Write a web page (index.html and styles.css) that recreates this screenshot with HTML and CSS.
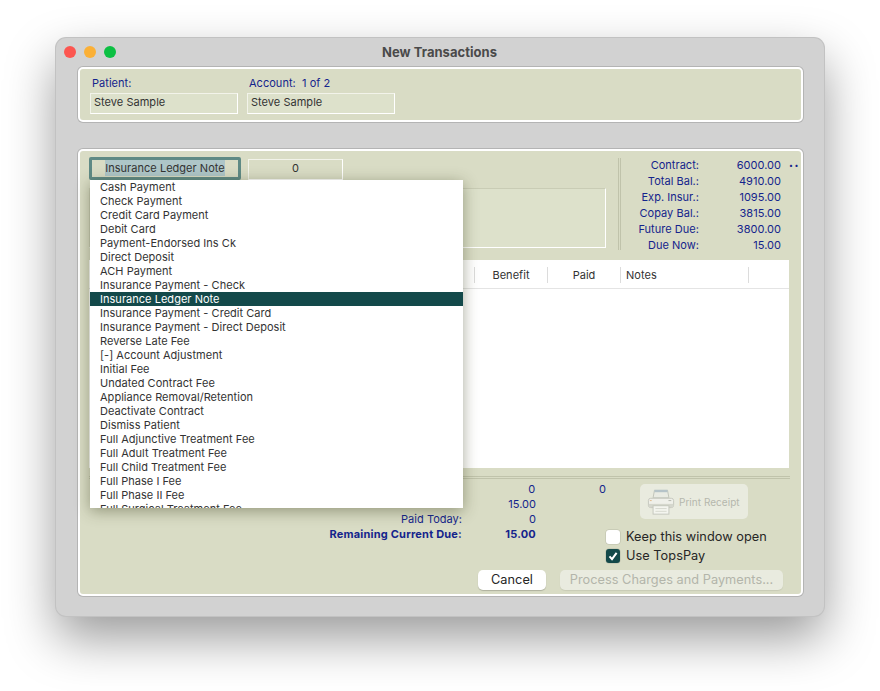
FILE: index.html
```html
<!DOCTYPE html>
<html lang="en">
<head>
    <meta charset="UTF-8">
    <meta name="viewport" content="width=device-width, initial-scale=1.0">
    <title>New Transactions</title>
    <link rel="stylesheet" href="styles.css">
</head>
<body>
    <div class="window">
        <div class="titlebar">
            <div class="lights">
                <span class="light red"></span>
                <span class="light yellow"></span>
                <span class="light green"></span>
            </div>
            <div class="title">New Transactions</div>
        </div>

        <div class="panel panel-patient">
            <div class="patient-col col-name">
                <div class="label">Patient:</div>
                <div class="field">Steve Sample</div>
            </div>
            <div class="patient-col col-account">
                <div class="label">Account:&nbsp; 1 of 2</div>
                <div class="field">Steve Sample</div>
            </div>
        </div>

        <div class="panel panel-main">
            <div class="top-row">
                <div class="top-left">
                    <div class="popup-row">
                        <div class="popup"><span class="popup-text">Insurance Ledger Note</span></div>
                        <div class="field field-amount">0</div>
                    </div>
                    <div class="note-box"></div>
                </div>
                <div class="stats">
                    <div class="stat"><span class="stat-label">Contract:</span><span class="stat-value">6000.00</span><span class="stat-more">••</span></div>
                    <div class="stat"><span class="stat-label">Total Bal.:</span><span class="stat-value">4910.00</span></div>
                    <div class="stat"><span class="stat-label">Exp. Insur.:</span><span class="stat-value">1095.00</span></div>
                    <div class="stat"><span class="stat-label">Copay Bal.:</span><span class="stat-value">3815.00</span></div>
                    <div class="stat"><span class="stat-label">Future Due:</span><span class="stat-value">3800.00</span></div>
                    <div class="stat"><span class="stat-label">Due Now:</span><span class="stat-value">15.00</span></div>
                </div>
            </div>

            <div class="table">
                <div class="table-head">
                    <div class="th th-first"></div>
                    <div class="th th-benefit">Benefit</div>
                    <div class="th th-paid">Paid</div>
                    <div class="th th-notes">Notes</div>
                    <div class="th th-rest"></div>
                </div>
            </div>

            <div class="bottom-row">
                <div class="totals">
                    <div class="total"><span class="total-label"></span><span class="total-value">0</span><span class="total-extra">0</span></div>
                    <div class="total"><span class="total-label"></span><span class="total-value">15.00</span></div>
                    <div class="total"><span class="total-label">Paid Today:</span><span class="total-value">0</span></div>
                    <div class="total total-strong"><span class="total-label">Remaining Current Due:</span><span class="total-value">15.00</span></div>
                </div>
                <div class="options">
                    <div class="print-btn">
                        <svg class="printer" width="28" height="28" viewBox="0 0 30 30">
                            <path d="M8 2.5h14l1.5 8h-17z" fill="#e9ebe3" stroke="#c0c3b8"/>
                            <rect x="8" y="2" width="14" height="2.5" fill="#b5c3c8"/>
                            <rect x="1.5" y="11" width="27" height="10" rx="2.5" fill="#eff0ea" stroke="#c4c6bc"/>
                            <rect x="2" y="17" width="26" height="3.5" fill="#d5d7cd"/>
                            <rect x="6.5" y="19" width="17" height="9" fill="#f4f5ef" stroke="#c4c6bc"/>
                            <path d="M9 22h12M9 25h12" stroke="#d5d7cd"/>
                            <rect x="3" y="13" width="2" height="1" fill="#e3b98a"/>
                            <rect x="23" y="13" width="3" height="1" fill="#b4b6ac"/>
                        </svg>
                        <span>Print Receipt</span>
                    </div>
                    <div class="check-row"><span class="check"></span>Keep this window open</div>
                    <div class="check-row">
                        <span class="check checked">
                            <svg width="14" height="14" viewBox="0 0 14 14"><path d="M3.5 7.4l2.5 2.8 4.6-6.4" fill="none" stroke="#fff" stroke-width="2"/></svg>
                        </span>Use TopsPay
                    </div>
                </div>
            </div>

            <div class="actions">
                <div class="btn">Cancel</div>
                <div class="btn btn-disabled">Process Charges and Payments...</div>
            </div>

            <div class="menu">
                <div class="menu-item">Cash Payment</div>
                <div class="menu-item">Check Payment</div>
                <div class="menu-item">Credit Card Payment</div>
                <div class="menu-item">Debit Card</div>
                <div class="menu-item">Payment-Endorsed Ins Ck</div>
                <div class="menu-item">Direct Deposit</div>
                <div class="menu-item">ACH Payment</div>
                <div class="menu-item">Insurance Payment - Check</div>
                <div class="menu-item selected">Insurance Ledger Note</div>
                <div class="menu-item">Insurance Payment - Credit Card</div>
                <div class="menu-item">Insurance Payment - Direct Deposit</div>
                <div class="menu-item">Reverse Late Fee</div>
                <div class="menu-item">[-] Account Adjustment</div>
                <div class="menu-item">Initial Fee</div>
                <div class="menu-item">Undated Contract Fee</div>
                <div class="menu-item">Appliance Removal/Retention</div>
                <div class="menu-item">Deactivate Contract</div>
                <div class="menu-item">Dismiss Patient</div>
                <div class="menu-item">Full Adjunctive Treatment Fee</div>
                <div class="menu-item">Full Adult Treatment Fee</div>
                <div class="menu-item">Full Child Treatment Fee</div>
                <div class="menu-item">Full Phase I Fee</div>
                <div class="menu-item">Full Phase II Fee</div>
                <div class="menu-item">Full Surgical Treatment Fee</div>
            </div>
        </div>
    </div>
</body>
</html>
```

FILE: styles.css
```css
* {
    box-sizing: border-box;
}
body {
    height: 691px;
    margin: 0;
    padding-top: 38px;
    overflow: hidden;
    background-color: #fff;
    font-family: Inter, "Liberation Sans", sans-serif;
    font-size: 11px;
    letter-spacing: 0.03px;
    color: #333;
}
.window {
    width: 768px;
    height: 578px;
    margin-left: 56px;
    padding: 0 21px 0 22px;
    background-color: #d2d2d2;
    border-radius: 10px;
    box-shadow: 0 0 0 1px #c2c2c2, 0 22px 50px rgba(0, 0, 0, 0.4);
}
.titlebar {
    position: relative;
    height: 29px;
    text-align: center;
    line-height: 28px;
}
.lights {
    position: absolute;
    left: -14px;
    top: 8px;
    display: flex;
    gap: 8px;
}
.light {
    width: 12px;
    height: 12px;
    border-radius: 50%;
}
.red {
    background-color: #fc5650;
}
.yellow {
    background-color: #fbb036;
}
.green {
    background-color: #0cc043;
}
.title {
    padding-right: 2px;
    font-size: 13px;
    font-weight: 700;
    color: #4a4a4a;
}
.panel {
    background-color: #d9dcc5;
    border: 2px solid #fff;
    border-radius: 5px;
    box-shadow: 0 0 0 1px #b4b4b4;
}
.panel-patient {
    display: flex;
    height: 55px;
    padding: 7px 0 0 10px;
    margin-bottom: 27px;
}
.patient-col {
    display: flex;
    flex-direction: column;
}
.col-name {
    width: 157px;
}
.col-account {
    width: 148px;
}
.label {
    height: 17px;
    padding-left: 2px;
    line-height: 14px;
    color: #14248c;
}
.field {
    height: 21px;
    padding-left: 3px;
    line-height: 17px;
    color: #333;
    background-color: #dde1cb;
    border: 1px solid #fff;
    border-top-color: #f2f3ea;
    border-left-color: #f2f3ea;
}
.col-name .field {
    width: 148px;
}
.panel-main {
    position: relative;
    height: 447px;
    padding: 6px 11px 0 9px;
}
.top-row {
    display: flex;
    height: 103px;
}
.top-left {
    flex-shrink: 0;
    width: 517px;
    margin-right: 12px;
}
.popup-row {
    display: flex;
    align-items: flex-end;
    gap: 7px;
}
.popup {
    width: 152px;
    height: 23px;
    line-height: 17px;
    text-align: center;
    background-color: #d9dcc5;
    border: 3px solid #5f8a85;
    border-radius: 2px;
}
.popup-text {
    padding: 1px 0;
    background-color: #aec6c8;
}
.field-amount {
    width: 95px;
    padding: 0;
    text-align: center;
    background-color: #d9dcc5;
}
.note-box {
    height: 60px;
    margin-top: 8px;
    background-color: #dde1cb;
    border: 1px solid #fff;
    border-top-color: #c9ccb5;
    border-left-color: #c9ccb5;
}
.stats {
    flex-shrink: 0;
    width: 172px;
    height: 92px;
    margin-top: 1px;
    color: #14248c;
    border-left: 3px double #c0c3ab;
}
.stat {
    position: relative;
    display: flex;
    height: 16px;
    line-height: 15px;
}
.stat-label {
    flex-shrink: 0;
    width: 78px;
    text-align: right;
}
.stat-value {
    flex-shrink: 0;
    width: 82px;
    text-align: right;
}
.stat-more {
    position: absolute;
    left: 168px;
    top: 0;
    font-size: 7px;
    letter-spacing: 1.5px;
}
.table {
    width: 700px;
    height: 208px;
    background-color: #fff;
}
.table-head {
    display: flex;
    height: 29px;
    border-bottom: 1px solid #e4e4e4;
}
.th {
    height: 16px;
    margin-top: 7px;
    line-height: 16px;
    border-right: 1px solid #dcdcdc;
}
.th-first {
    width: 386px;
}
.th-benefit, .th-paid {
    width: 73px;
    text-align: center;
}
.th-notes {
    width: 128px;
    padding-left: 5px;
}
.th-rest {
    border: none;
}
.bottom-row {
    display: flex;
    height: 93px;
    margin-top: 8px;
    padding-top: 3px;
    width: 701px;
    border-top: 3px double #c0c3ab;
}
.totals {
    width: 517px;
    color: #14248c;
}
.total {
    display: flex;
    height: 15px;
    line-height: 14px;
}
.total-label {
    width: 373px;
    text-align: right;
}
.total-value {
    width: 74px;
    text-align: right;
}
.total-extra {
    width: 71px;
    text-align: right;
}
.total-strong {
    font-weight: 700;
    letter-spacing: 0.2px;
}
.options {
    display: flex;
    flex-direction: column;
    margin-top: 2px;
}
.print-btn {
    display: flex;
    align-items: center;
    gap: 4px;
    width: 108px;
    height: 35px;
    margin-left: 34px;
    margin-bottom: 8px;
    padding-left: 7px;
    font-size: 10px;
    color: #b5b7ad;
    background-color: #e9ebdf;
    border-radius: 5px;
}
.printer {
    flex-shrink: 0;
}
.check-row {
    display: flex;
    align-items: center;
    gap: 6px;
    height: 19px;
    font-size: 12.75px;
    color: #262626;
}
.check {
    width: 14px;
    height: 14px;
    background-color: #fff;
    border-radius: 3px;
    box-shadow: 0 0 0 0.5px #b9bba9;
}
.checked {
    background-color: #13494a;
}
.checked svg {
    display: block;
}
.actions {
    display: flex;
    justify-content: flex-end;
    gap: 14px;
    width: 694px;
    margin-top: 1px;
}
.btn {
    height: 20px;
    width: 68px;
    text-align: center;
    line-height: 20px;
    font-size: 12.75px;
    color: #262626;
    background-color: #fff;
    border-radius: 5px;
    box-shadow: 0 1px 1px rgba(0, 0, 0, 0.2);
}
.btn-disabled {
    width: 223px;
    color: #b3b5aa;
    background-color: #e9ebdf;
    box-shadow: 0 1px 1px rgba(0, 0, 0, 0.08);
}
.menu {
    position: absolute;
    left: 10px;
    top: 29px;
    width: 373px;
    height: 328px;
    overflow: hidden;
    background-color: #fff;
    box-shadow: 0 3px 14px rgba(60, 65, 30, 0.45);
}
.menu-item {
    height: 14px;
    padding-left: 10px;
    line-height: 14px;
    color: #333;
}
.selected {
    color: #fff;
    background-color: #13494a;
}
```
